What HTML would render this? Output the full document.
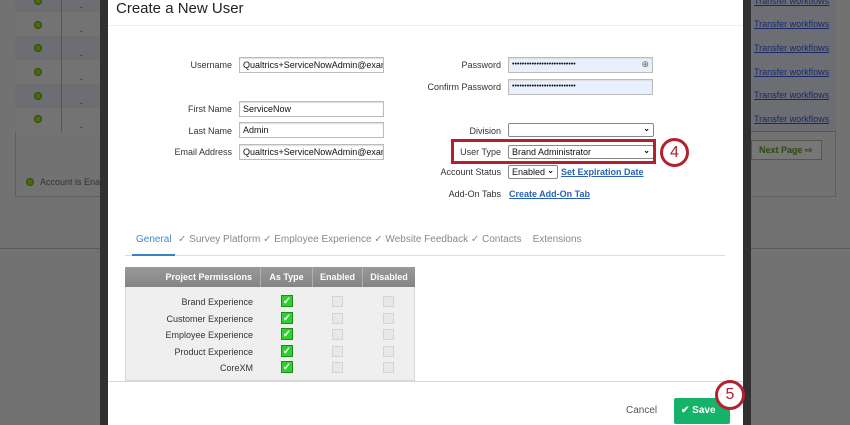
<!DOCTYPE html>
<html style="background:#727272"><head><style>
*{box-sizing:border-box;margin:0;padding:0}
body{width:850px;height:425px;overflow:hidden;background:#727272;font-family:"Liberation Sans",sans-serif;position:relative}
.a{position:absolute}
.lbl{position:absolute;font-size:9px;color:#333;text-align:right}
.inp{position:absolute;height:16px;border:1px solid #bbb;background:#fff;font-size:9px;color:#111;padding:2px 3px;white-space:nowrap;overflow:hidden;box-shadow:inset 0 1px 1px #ddd}
.sel{position:absolute;height:14px;border:1px solid #888;border-radius:2px;background:#fff;font-size:9px;color:#111;padding:1px 3px;white-space:nowrap}
.chev{position:absolute;right:3px;top:0px;font-size:8px;font-weight:bold}
.lnk{position:absolute;font-size:9px;color:#2962b8;font-weight:bold;text-decoration:underline}
.bgl{position:absolute;font-size:9px;color:#1a2a66;text-decoration:underline}
.dot{position:absolute;width:8px;height:8px;border-radius:50%;background:#4a6a10;border:1px solid #2e4a08}
.gk{position:absolute;width:12px;height:12px;background:#2fcf2f;border:1px solid #199119;color:#fff;font-size:10px;line-height:11px;text-align:center;font-weight:bold}
.ek{position:absolute;width:11px;height:11px;background:#e8e8e8;border:1px solid #d4d4d4}
.pl{position:absolute;font-size:9px;color:#333;text-align:right;width:120px}
.th{position:absolute;top:267px;height:20px;font-size:9px;color:#fff;font-weight:bold;line-height:20px;border-right:1px solid #b0b0b0}
</style></head><body>
<svg class="a" style="left:0;top:0" width="850" height="425"><rect width="850" height="425" fill="#727272"/></svg>
<div class="a" style="left:15px;top:0;width:100px;height:197px;border:1px solid #5e5e5e;background:#727272"></div>
<div class="a" style="left:15px;top:0;width:100px;height:132px;background:#6c6e74;border-bottom:1px solid #555"></div>
<div class="a" style="left:15px;top:12px;width:100px;height:24px;background:#737373"></div>
<div class="a" style="left:15px;top:60px;width:100px;height:24px;background:#737373"></div>
<div class="a" style="left:15px;top:108px;width:100px;height:24px;background:#737373"></div>
<div class="a" style="left:61px;top:0;width:1px;height:132px;background:#555"></div>
<div class="dot" style="left:34px;top:-3px"></div><div class="dot" style="left:34px;top:21px"></div><div class="dot" style="left:34px;top:44px"></div><div class="dot" style="left:34px;top:68px"></div><div class="dot" style="left:34px;top:92px"></div><div class="dot" style="left:34px;top:115px"></div>
<div class="a" style="left:80px;top:-5px;font-size:9px;color:#333;line-height:24px">-<br>-<br>-<br>-<br>-<br>-</div>
<div class="dot" style="left:26px;top:178px"></div>
<div class="a" style="left:40px;top:177px;font-size:9px;color:#333">Account is Enabled</div>
<div class="a" style="left:0;top:248px;width:850px;height:1px;background:#5a5a5a"></div>
<div class="a" style="left:740px;top:0;width:96px;height:197px;border:1px solid #5e5e5e;background:#727272"></div>
<div class="a" style="left:740px;top:0;width:96px;height:132px;background:#6c6e74;border-bottom:1px solid #555"></div>
<div class="bgl" style="left:754px;top:-4px">Transfer workflows</div>
<div class="bgl" style="left:754px;top:19px">Transfer workflows</div>
<div class="bgl" style="left:754px;top:43px">Transfer workflows</div>
<div class="bgl" style="left:754px;top:67px">Transfer workflows</div>
<div class="bgl" style="left:754px;top:90px">Transfer workflows</div>
<div class="bgl" style="left:754px;top:114px">Transfer workflows</div>
<div class="a" style="left:751px;top:140px;width:71px;height:20px;border:1px solid #555;background:#777;font-size:9px;font-weight:bold;color:#2c4a0c;padding:4px 7px">Next Page ⇨</div>
<div class="a" style="left:100px;top:0;width:8px;height:425px;background:#303030"></div>
<div class="a" style="left:743px;top:0;width:8px;height:425px;background:#303030"></div>
<div class="a" style="left:108px;top:0;width:635px;height:425px;background:#fff"></div>
<div class="a" style="left:116px;top:0;font-size:15px;color:#222">Create a New User</div>
<div class="a" style="left:108px;top:25px;width:635px;height:1px;background:#eee"></div>

<div class="lbl" style="left:150px;width:82px;top:60px">Username</div>
<div class="inp" style="left:239px;top:57px;width:145px">Qualtrics+ServiceNowAdmin@exam</div>
<div class="lbl" style="left:150px;width:82px;top:104px">First Name</div>
<div class="inp" style="left:239px;top:101px;width:145px">ServiceNow</div>
<div class="lbl" style="left:150px;width:82px;top:126px">Last Name</div>
<div class="inp" style="left:239px;top:122px;width:145px">Admin</div>
<div class="lbl" style="left:150px;width:82px;top:147px">Email Address</div>
<div class="inp" style="left:239px;top:144px;width:145px">Qualtrics+ServiceNowAdmin@exam</div>

<div class="lbl" style="left:400px;width:101px;top:60px">Password</div>
<div class="inp" style="left:508px;top:57px;width:145px;background:#e8f0fe;font-size:7px;padding-top:3px">••••••••••••••••••••••••••<span style="position:absolute;right:3px;top:1px;font-size:9px;color:#666">⊕</span></div>
<div class="lbl" style="left:400px;width:101px;top:82px">Confirm Password</div>
<div class="inp" style="left:508px;top:79px;width:145px;background:#e8f0fe;font-size:7px;padding-top:3px">••••••••••••••••••••••••••</div>
<div class="lbl" style="left:400px;width:101px;top:126px">Division</div>
<div class="sel" style="left:508px;top:123px;width:146px"><span class="chev">⌄</span></div>
<div class="lbl" style="left:400px;width:101px;top:147px">User Type</div>
<div class="sel" style="left:508px;top:145px;width:146px">Brand Administrator<span class="chev">⌄</span></div>
<div class="a" style="left:451px;top:139px;width:205px;height:25px;border:3px solid #b5202e"></div>
<div class="a" style="left:660px;top:138px;width:29px;height:29px;border:3px solid #b5202e;border-radius:50%;background:#fff;color:#b5202e;font-size:16px;text-align:center;line-height:23px">4</div>
<div class="lbl" style="left:400px;width:101px;top:167px">Account Status</div>
<div class="sel" style="left:508px;top:165px;width:50px">Enabled<span class="chev">⌄</span></div>
<div class="lnk" style="left:561px;top:167px">Set Expiration Date</div>
<div class="lbl" style="left:400px;width:101px;top:189px">Add-On Tabs</div>
<div class="lnk" style="left:509px;top:189px">Create Add-On Tab</div>

<div class="a" style="left:136px;top:234px;font-size:10px;color:#4a86c8">General</div>
<div class="a" style="left:178px;top:234px;font-size:10px;color:#888;white-space:nowrap">✓ Survey Platform ✓ Employee Experience ✓ Website Feedback ✓ Contacts &nbsp;&nbsp; Extensions</div>
<div class="a" style="left:125px;top:255px;width:600px;height:1px;background:#ddd"></div>
<div class="a" style="left:132px;top:254px;width:43px;height:2px;background:#3b82c4"></div>

<div class="a" style="left:125px;top:267px;width:290px;height:114px;background:#efefef;border:1px solid #d8d8d8"></div>
<div class="a" style="left:125px;top:267px;width:290px;height:20px;background:linear-gradient(#999,#848484)"></div>
<div class="th" style="left:125px;width:136px;text-align:right;padding-right:8px">Project Permissions</div>
<div class="th" style="left:261px;width:52px;text-align:center">As Type</div>
<div class="th" style="left:313px;width:50px;text-align:center">Enabled</div>
<div class="th" style="left:363px;width:52px;text-align:center;border:none">Disabled</div>
<div class="pl" style="left:133px;top:297px">Brand Experience</div>
<div class="pl" style="left:133px;top:314px">Customer Experience</div>
<div class="pl" style="left:133px;top:330px">Employee Experience</div>
<div class="pl" style="left:133px;top:347px">Product Experience</div>
<div class="pl" style="left:133px;top:363px">CoreXM</div>
<div class="gk" style="left:281px;top:295px">✓</div><div class="gk" style="left:281px;top:312px">✓</div><div class="gk" style="left:281px;top:328px">✓</div><div class="gk" style="left:281px;top:345px">✓</div><div class="gk" style="left:281px;top:361px">✓</div>
<div class="ek" style="left:332px;top:296px"></div><div class="ek" style="left:332px;top:313px"></div><div class="ek" style="left:332px;top:329px"></div><div class="ek" style="left:332px;top:346px"></div><div class="ek" style="left:332px;top:362px"></div>
<div class="ek" style="left:383px;top:296px"></div><div class="ek" style="left:383px;top:313px"></div><div class="ek" style="left:383px;top:329px"></div><div class="ek" style="left:383px;top:346px"></div><div class="ek" style="left:383px;top:362px"></div>

<div class="a" style="left:108px;top:381px;width:635px;height:44px;background:#fff;border-top:1px solid #d8d8d8"></div>
<div class="a" style="left:626px;top:405px;font-size:10px;color:#555">Cancel</div>
<div class="a" style="left:674px;top:398px;width:56px;height:26px;background:#17b26a;border-radius:2px;color:#fff;font-size:10px;font-weight:bold;line-height:26px;padding-left:7px">✔ Save</div>
<div class="a" style="left:715px;top:380px;width:30px;height:30px;border:3px solid #b5202e;border-radius:50%;background:#fff;color:#b5202e;font-size:16px;text-align:center;line-height:24px">5</div>
</body></html>
